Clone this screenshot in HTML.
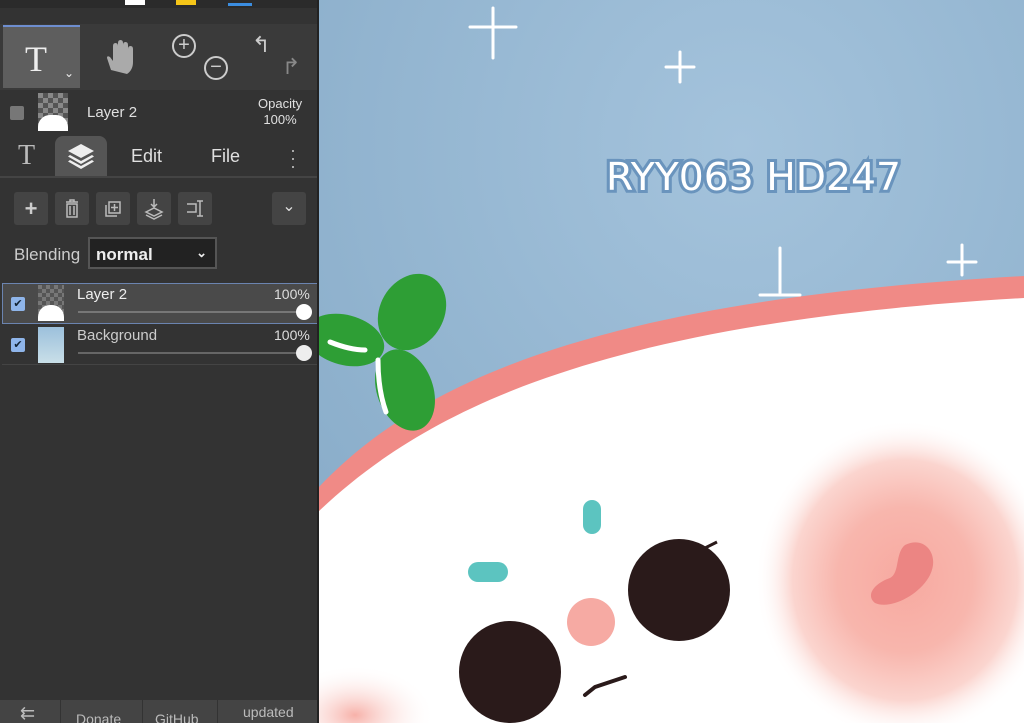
<!DOCTYPE html>
<html><head><meta charset="utf-8"><style>
*{margin:0;padding:0;box-sizing:border-box}
html,body{width:1024px;height:723px;overflow:hidden}
body{background:#8fb3cf;font-family:"Liberation Sans",sans-serif;position:relative}
svg{display:block}
#side{position:absolute;left:0;top:0;width:319px;height:723px;background:#333;color:#ddd;border-right:2px solid #222;overflow:hidden}
.abs{position:absolute}
.btn{position:absolute;top:192px;width:34px;height:33px;background:#444;border-radius:3px}
.txt{color:#e0e0e0}
</style></head><body>
<svg class="abs" style="left:318px;top:0" width="706" height="723" viewBox="318 0 706 723">
<defs>
<radialGradient id="bg" cx="0.6" cy="0.2" r="0.9"><stop offset="0" stop-color="#a4c3dc"/><stop offset="1" stop-color="#86aac7"/></radialGradient>
<radialGradient id="bl" cx="0.5" cy="0.5" r="0.5"><stop offset="0" stop-color="#f7a9a0"/><stop offset="0.45" stop-color="#f8b6ad"/><stop offset="0.75" stop-color="#fbd5cf"/><stop offset="1" stop-color="#fff" stop-opacity="0"/></radialGradient>
<radialGradient id="bl2" cx="0.5" cy="0.5" r="0.5"><stop offset="0" stop-color="#f7b1a9"/><stop offset="1" stop-color="#fff" stop-opacity="0"/></radialGradient>
</defs>
<rect x="318" y="0" width="706" height="723" fill="url(#bg)"/>
<path d="M318 488 C420 380 600 300 1024 276 L1024 723 L318 723 Z" fill="#f08a86"/>
<path d="M318 512 C430 405 610 322 1024 298 L1024 723 L318 723 Z" fill="#fff"/>
<ellipse cx="905" cy="580" rx="150" ry="160" fill="url(#bl)"/>
<ellipse cx="355" cy="715" rx="80" ry="50" fill="url(#bl2)"/>
<path d="M905 545 c20 -10 35 10 25 30 c-10 20 -40 35 -55 28 c-10 -8 0 -20 15 -25 c10 -5 5 -25 15 -33z" fill="#ec8583"/>
<circle cx="679" cy="590" r="51" fill="#2a1a1a"/>
<circle cx="510" cy="672" r="51" fill="#2a1a1a"/>
<circle cx="591" cy="622" r="24" fill="#f6aaa3"/>
<rect x="583" y="500" width="18" height="34" rx="9" fill="#5cc4c0"/>
<rect x="468" y="562" width="40" height="20" rx="10" fill="#5cc4c0"/>
<path d="M585 695 l10 -8 l30 -10" stroke="#2a1a1a" stroke-width="4" fill="none" stroke-linecap="round"/>
<path d="M705 548 l12 -6" stroke="#2a1a1a" stroke-width="3"/>
<ellipse cx="412" cy="312" rx="32" ry="40" transform="rotate(30 412 312)" fill="#2e9e35"/>
<ellipse cx="345" cy="340" rx="40" ry="25" transform="rotate(15 345 340)" fill="#2e9e35"/>
<ellipse cx="405" cy="390" rx="28" ry="42" transform="rotate(-20 405 390)" fill="#2e9e35"/>
<path d="M330 342 q20 8 35 8 M378 360 q0 30 8 52" stroke="#fff" stroke-width="5" fill="none" stroke-linecap="round"/>
<g fill="none" stroke="#fff" stroke-width="3" stroke-linecap="round">
<path d="M493 8 v50 M470 27 h46"/><path d="M680 52 v30 M666 67 h28"/>
<path d="M780 248 v45 M760 295 h40"/><path d="M962 245 v30 M948 262 h28"/></g>
<text x="606" y="190" font-family="DejaVu Sans" font-size="38" textLength="295" lengthAdjust="spacingAndGlyphs" fill="#fff" stroke="#6a94bd" stroke-width="6" paint-order="stroke">RYY063 HD247</text>
</svg>
<div id="side">
<div class="abs" style="left:0;top:0;width:318px;height:8px;background:#2b2b2b"></div>
<div class="abs" style="left:125px;top:0;width:20px;height:5px;background:#fff"></div>
<div class="abs" style="left:176px;top:0;width:20px;height:5px;background:#f5c518"></div>
<div class="abs" style="left:228px;top:3px;width:24px;height:3px;background:#3b8de0"></div>
<div class="abs" style="left:0;top:24px;width:318px;height:66px;background:#3a3a3a"></div>
<div class="abs" style="left:3px;top:25px;width:77px;height:63px;background:#5e5e5e;border-top:2px solid #6e8ed0"></div>
<div class="abs txt" style="left:25px;top:38px;font-family:'Liberation Serif';font-size:36px;color:#eee">T</div>
<div class="abs" style="left:64px;top:66px;color:#eee;font-size:12px">⌄</div>
<svg class="abs" style="left:105px;top:40px" width="30" height="34" viewBox="0 0 30 34"><path d="M6 30 L2 18 q0 -3 3 -1 l3 4 V6 q0 -3 2.5 -3 T13 6 V14 V3 q0 -3 2.5 -3 T18 3 V14 V5 q0 -3 2.5 -3 T23 5 V15 V9 q0 -3 2.5 -3 T28 9 V22 q0 8 -6 12 Z" fill="#aaa"/></svg>
<div class="abs" style="left:172px;top:34px;width:24px;height:24px;border:2px solid #ccc;border-radius:50%;text-align:center;line-height:19px;color:#ccc;font-size:20px">+</div>
<div class="abs" style="left:204px;top:56px;width:24px;height:24px;border:2px solid #ccc;border-radius:50%;text-align:center;line-height:18px;color:#ccc;font-size:20px">−</div>
<div class="abs" style="left:252px;top:32px;color:#ccc;font-size:22px">↰</div>
<div class="abs" style="left:282px;top:54px;color:#888;font-size:22px">↱</div>
<div class="abs" style="left:10px;top:106px;width:14px;height:14px;background:#777;border-radius:2px"></div>
<div class="abs" style="left:38px;top:93px;width:30px;height:38px;background:repeating-conic-gradient(#555 0 25%,#888 0 50%) 0 0/10px 10px"></div>
<div class="abs" style="left:38px;top:115px;width:30px;height:16px;background:#fff;border-radius:12px 12px 0 0"></div>
<div class="abs txt" style="left:87px;top:104px;font-size:15px">Layer 2</div>
<div class="abs txt" style="left:258px;top:96px;font-size:13px;text-align:center;line-height:16px">Opacity<br>100%</div>
<div class="abs" style="left:0;top:176px;width:318px;height:2px;background:#444"></div>
<div class="abs" style="left:55px;top:136px;width:52px;height:40px;background:#555;border-radius:8px 8px 0 0"></div>
<div class="abs" style="left:18px;top:140px;font-family:'Liberation Serif';font-size:28px;color:#bbb">T</div>
<svg class="abs" style="left:67px;top:143px" width="28" height="26" viewBox="0 0 28 26"><path d="M14 1 L27 8 L14 15 L1 8Z" fill="#eee"/><path d="M3 12 L14 18 L25 12 L27 13.5 L14 21 L1 13.5Z" fill="#eee"/><path d="M3 17 L14 23 L25 17 L27 18.5 L14 26 L1 18.5Z" fill="#eee"/></svg>
<div class="abs txt" style="left:131px;top:146px;font-size:18px">Edit</div>
<div class="abs txt" style="left:211px;top:146px;font-size:18px">File</div>
<div class="abs" style="left:290px;top:146px;color:#bbb;font-size:18px;line-height:8px">·<br>·<br>·</div>
<div class="btn" style="left:14px;color:#ccc;text-align:center;font-size:22px;line-height:33px;font-weight:bold">+</div>
<div class="btn" style="left:55px"><svg width="34" height="33"><path d="M11 10h12M15 10v-2h4v2M12 12h10v13h-10z M15 14v9 M19 14v9" stroke="#bbb" stroke-width="1.5" fill="none"/></svg></div>
<div class="btn" style="left:96px"><svg width="34" height="33"><path d="M13 10h11v11h-11z M10 13v11h11 M18.5 12v7 M15 15.5h7" stroke="#bbb" stroke-width="1.5" fill="none"/></svg></div>
<div class="btn" style="left:137px"><svg width="34" height="33"><path d="M17 7v8 M14 12l3 3 3-3 M9 20l8-4 8 4-8 4z M9 23l8 4 8-4" stroke="#bbb" stroke-width="1.5" fill="none"/></svg></div>
<div class="btn" style="left:178px"><svg width="34" height="33"><path d="M9 12h9v8h-9 M22 9v15 M19 9h6 M19 24h6" stroke="#bbb" stroke-width="1.5" fill="none"/></svg></div>
<div class="btn" style="left:272px;color:#ddd;text-align:center;font-size:16px;line-height:30px">⌄</div>
<div class="abs" style="left:14px;top:245px;font-size:17px;color:#ccc">Blending</div>
<div class="abs" style="left:88px;top:237px;width:129px;height:32px;background:#222;border:2px solid #555;color:#eee;font-size:17px;padding:6px 6px;font-weight:bold">normal<span style="position:absolute;right:8px;font-size:13px">⌄</span></div>
<div class="abs" style="left:2px;top:283px;width:316px;height:41px;background:#4a4a4a;border:1px solid #6b84b0"></div>
<div class="abs" style="left:11px;top:297px;width:14px;height:14px;background:#8fb5ea;border-radius:2px;color:#123;font-size:11px;text-align:center;line-height:14px">✔</div>
<div class="abs" style="left:11px;top:338px;width:14px;height:14px;background:#8fb5ea;border-radius:2px;color:#123;font-size:11px;text-align:center;line-height:14px">✔</div>
<div class="abs" style="left:38px;top:285px;width:26px;height:36px;background:repeating-conic-gradient(#555 0 25%,#777 0 50%) 0 0/8px 8px"></div>
<div class="abs" style="left:38px;top:305px;width:26px;height:16px;background:#fff;border-radius:12px 12px 0 0"></div>
<div class="abs" style="left:38px;top:327px;width:26px;height:36px;background:linear-gradient(#9cc0dc,#c9dfe8)"></div>
<div class="abs txt" style="left:77px;top:286px;font-size:15px;color:#eee">Layer 2</div>
<div class="abs" style="left:274px;top:286px;font-size:14px;color:#ddd">100%</div>
<div class="abs" style="left:77px;top:327px;font-size:15px;color:#ccc">Background</div>
<div class="abs" style="left:274px;top:327px;font-size:14px;color:#ddd">100%</div>
<div class="abs" style="left:78px;top:311px;width:225px;height:2px;background:#777"></div>
<div class="abs" style="left:78px;top:352px;width:225px;height:2px;background:#666"></div>
<div class="abs" style="left:296px;top:304px;width:16px;height:16px;background:#fff;border-radius:50%"></div>
<div class="abs" style="left:296px;top:345px;width:16px;height:16px;background:#eee;border-radius:50%"></div>
<div class="abs" style="left:2px;top:364px;width:316px;height:1px;background:#444"></div>
<div class="abs" style="left:0;top:700px;width:318px;height:23px;background:#444;overflow:hidden">
<div class="abs" style="left:60px;top:0;width:1px;height:23px;background:#333"></div>
<div class="abs" style="left:142px;top:0;width:1px;height:23px;background:#333"></div>
<div class="abs" style="left:217px;top:0;width:1px;height:23px;background:#333"></div>
<div class="abs" style="left:20px;top:4px;color:#bbb;font-size:18px;line-height:18px">⇇</div>
<div class="abs" style="left:76px;top:12px;color:#bbb;font-size:14px;line-height:14px">Donate</div>
<div class="abs" style="left:155px;top:12px;color:#bbb;font-size:14px;line-height:14px">GitHub</div>
<div class="abs" style="left:243px;top:5px;color:#bbb;font-size:14px;line-height:14px">updated</div>
</div>
</div>
</body></html>
